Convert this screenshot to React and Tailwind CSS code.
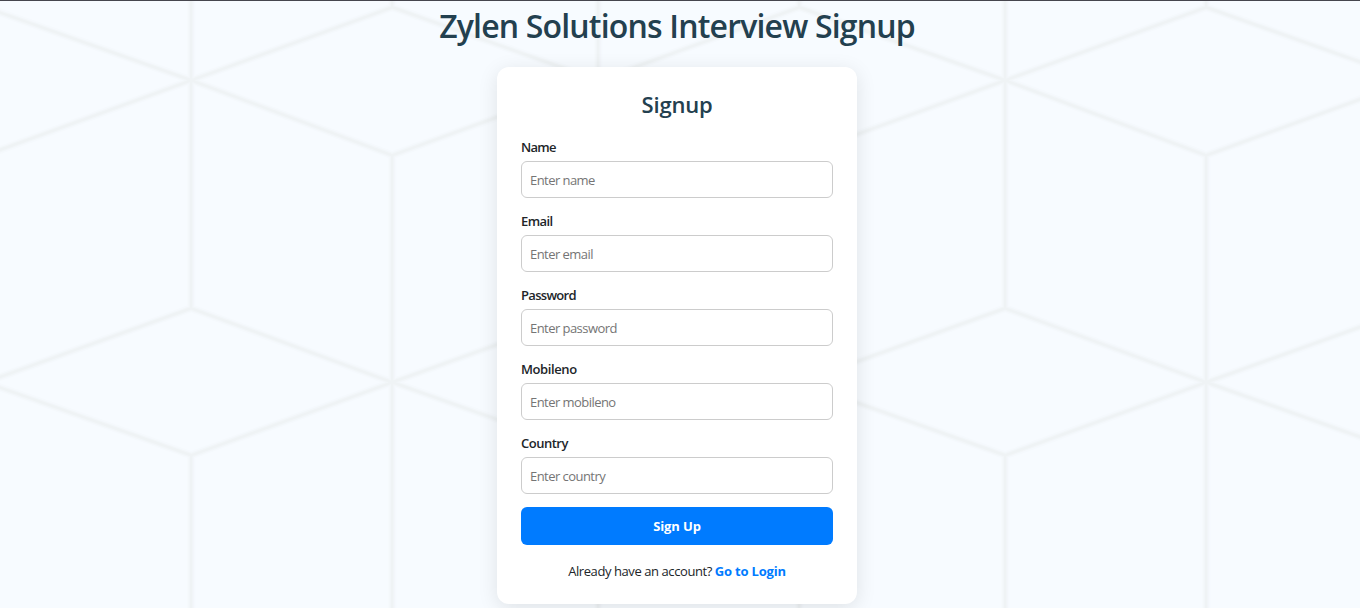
const tiles = [-407, 0, 407, 814, 1221];

function Lattice() {
  const d = tiles
    .map(
      (x) =>
        `M${x + 191} 0V308M${x + 191} 455V608M${x + 392} 0V7M${x + 392} 155V608` +
        `M${x + 191} 80L${x + 392} 7L${x + 598} 80L${x + 392} 155Z` +
        `M${x + 392} 382L${x + 598} 308L${x + 799} 382L${x + 598} 455Z`
    )
    .join('');
  return (
    <svg className="absolute inset-0 -z-10 h-full w-full" viewBox="0 0 1360 607" fill="none" aria-hidden="true">
      <g transform="translate(0.2 -0.7)" strokeLinejoin="bevel">
        <path d={d} stroke="#f5f9fd" strokeWidth="8" />
        <path d={d} stroke="#f2f6f9" strokeWidth="5" />
        <path d={d} stroke="#eff3f5" strokeWidth="2.5" />
      </g>
    </svg>
  );
}

const fields = [
  { label: 'Name', type: 'text', spacing: 'tracking-[-0.7px]' },
  { label: 'Email', type: 'email', spacing: 'tracking-[-0.6px]' },
  { label: 'Password', type: 'password', spacing: 'tracking-[-0.7px]' },
  { label: 'Mobileno', type: 'text', spacing: 'tracking-[-0.4px]' },
  { label: 'Country', type: 'text', spacing: 'tracking-[-0.5px]' },
];

function Field({ label, type, spacing }) {
  return (
    <label className="block h-[74px]">
      <span className={`block h-6 text-[13px] leading-[20px] font-semibold text-[#212529] ${spacing}`}>{label}</span>
      <input
        type={type}
        placeholder={`Enter ${label.toLowerCase()}`}
        className="block h-[37px] w-full rounded-md border border-[#ccc] bg-white px-2 text-[13px] tracking-[-0.55px] placeholder:text-[#757575]"
      />
    </label>
  );
}

export default function App() {
  return (
    <main className="relative isolate flex h-[608px] flex-col items-center overflow-hidden border-t border-[#46464e] bg-[#f7fbff] pr-1.5 font-['Open_Sans','Noto_Sans',sans-serif]">
      <Lattice />
      <h1 className="h-[66px] pt-[6px] text-[32px] leading-[38px] font-[550] tracking-[-0.82px] whitespace-nowrap text-[#23404f]">
        Zylen Solutions Interview Signup
      </h1>
      <form className="h-[537px] w-[360px] shrink-0 rounded-xl bg-white px-6 pt-6 shadow-[0_4px_20px_rgba(0,0,0,0.1)]">
        <h2 className="h-[46px] text-center text-[22px] leading-[27px] font-[550] tracking-[-0.2px] text-[#23404f]">Signup</h2>
        {fields.map((f) => (
          <Field key={f.label} {...f} />
        ))}
        <button
          type="button"
          className="block h-[38px] w-full rounded-md bg-[#007bff] pt-px text-[13px] font-bold tracking-[-0.1px] text-white"
        >
          Sign Up
        </button>
        <p className="mt-4 text-center text-[13px] leading-5 tracking-[-0.42px] text-[#212529]">
          Already have an account?{' '}
          <a href="#login" className="font-bold tracking-[-0.2px] text-[#007bff]">
            Go to Login
          </a>
        </p>
      </form>
    </main>
  );
}
